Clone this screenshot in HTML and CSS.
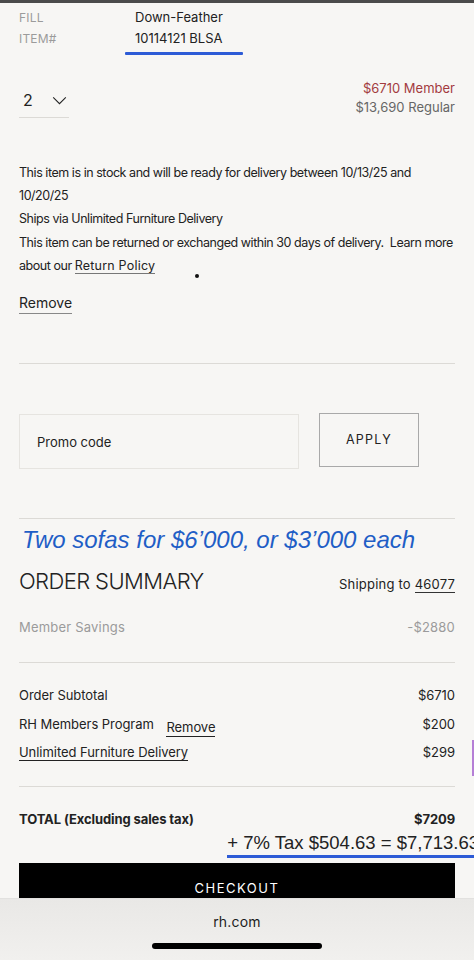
FILE: index.html
```html
<!DOCTYPE html>
<html lang="en">
<head>
    <meta charset="UTF-8">
    <meta name="viewport" content="width=device-width, initial-scale=1.0">
    <title>Cart - RH</title>
    <link rel="stylesheet" href="styles.css">
</head>
<body>
    <div class="top-edge"></div>

    <main class="cart">
        <!-- Item specs -->
        <div class="specs">
            <span class="spec-label">FILL</span>
            <span class="spec-value">Down-Feather</span>
            <span class="spec-label">ITEM#</span>
            <span class="spec-value">
                10114121 BLSA
                <span class="mark-line mark-item"></span>
            </span>
        </div>

        <div class="qty-row">
            <div class="qty">
                <span>2</span>
                <svg class="chevron" viewBox="0 0 16 10" fill="none" stroke="#222" stroke-width="1.2">
                    <path d="M1 1.5l7 7 7-7"/>
                </svg>
            </div>
            <div class="prices">
                <div class="price-member">$6710 Member</div>
                <div class="price-regular">$13,690 Regular</div>
            </div>
        </div>

        <div class="delivery">
            <p>This item is in stock and will be ready for delivery between 10/13/25 and 10/20/25</p>
            <p>Ships via Unlimited Furniture Delivery</p>
            <p>This item can be returned or exchanged within 30 days of delivery.&nbsp; Learn more about our <a href="#">Return Policy</a></p>
            <span class="stray-dot"></span>
        </div>

        <a href="#" class="remove-link">Remove</a>

        <hr class="divider divider-item">

        <!-- Promo -->
        <form class="promo">
            <input type="text" placeholder="Promo code">
            <button type="button">APPLY</button>
        </form>

        <hr class="divider divider-promo">

        <div class="deal-note">Two sofas for $6’000, or $3’000 each</div>

        <!-- Summary -->
        <div class="summary-head">
            <h2>ORDER SUMMARY</h2>
            <span class="ship-to">Shipping to <a href="#">46077</a></span>
        </div>

        <div class="line line-muted">
            <span>Member Savings</span>
            <span>-$2880</span>
        </div>

        <hr class="divider divider-savings">

        <div class="lines">
            <div class="line">
                <span>Order Subtotal</span>
                <span>$6710</span>
            </div>
            <div class="line">
                <span>RH Members Program <a href="#" class="small-remove">Remove</a></span>
                <span>$200</span>
            </div>
            <div class="line">
                <a href="#">Unlimited Furniture Delivery</a>
                <span>$299</span>
            </div>
        </div>

        <hr class="divider divider-total">

        <div class="line line-total">
            <span>TOTAL (Excluding sales tax)</span>
            <span>$7209</span>
        </div>

        <div class="tax-note">
            <span>+ 7% Tax $504.63 = $7,713.63</span>
        </div>

        <button class="checkout" type="button">CHECKOUT</button>
    </main>

    <div class="edge-tab"></div>

    <!-- Safari bottom bar -->
    <div class="browser-bar">
        <div class="url">rh.com</div>
        <div class="home-indicator"></div>
    </div>
</body>
</html>
```

FILE: styles.css
```css
/* Base */
* {
    box-sizing: border-box;
}
body {
    margin: 0;
    background-color: #f7f6f4;
    color: #222;
    font-family: Inter, "Liberation Sans", sans-serif;
    font-size: 12.5px;
    overflow: hidden;
    height: 960px;
}
a {
    color: inherit;
    text-decoration: none;
    border-bottom: 1px solid #555;
}

.top-edge {
    height: 3px;
    background-color: #4b4b4b;
}

.cart {
    padding: 0 19px;
}

/* Specs */
.specs {
    display: grid;
    grid-template-columns: 116px auto;
    line-height: 21px;
    padding-top: 4px;
}
.spec-label {
    color: #9b9b9b;
    font-size: 12px;
    letter-spacing: 0.2px;
}
.spec-value {
    font-size: 13px;
}
.mark-line {
    display: block;
    height: 3px;
    background-color: #2d5bd6;
    border-radius: 1px;
}
.mark-item {
    width: 118px;
    margin: 3px 0 0 -10px;
}

/* Quantity and prices */
.qty-row {
    display: flex;
    justify-content: space-between;
    margin-top: 24px;
}
.qty {
    display: flex;
    align-items: center;
    gap: 19px;
    width: 50px;
    margin-top: 11px;
    padding: 0 0 7px 4px;
    height: 28px;
    font-size: 16px;
    line-height: 20px;
    border-bottom: 1px solid #dcdad6;
}
.chevron {
    width: 15px;
    height: 9px;
}
.prices {
    text-align: right;
    font-size: 13px;
    line-height: 19px;
}
.price-member {
    color: #a33b3f;
}
.price-regular {
    color: #666;
}

/* Delivery info */
.delivery {
    position: relative;
    margin-top: 43px;
    line-height: 23.2px;
    letter-spacing: -0.45px;
}
.delivery p {
    margin: 0;
}
.delivery a {
    border-bottom-color: #777;
    letter-spacing: 0.2px;
}
.stray-dot {
    position: absolute;
    left: 176px;
    top: 113px;
    width: 4px;
    height: 4px;
    border-radius: 50%;
    background-color: #111;
}

.remove-link {
    display: inline-block;
    margin-top: 17px;
    font-size: 14px;
    line-height: 18px;
    padding-bottom: 1px;
    border-bottom-color: #888;
}

.divider {
    border: none;
    height: 1px;
    background-color: #dcdad6;
    margin: 0;
}
.divider-item {
    margin-top: 49px;
}

/* Promo */
.promo {
    display: flex;
    gap: 20px;
    margin-top: 50px;
}
.promo input {
    width: 280px;
    height: 55px;
    padding: 0 17px;
    background: transparent;
    border: 1px solid #e6e4e0;
    font-family: inherit;
    font-size: 13px;
    outline: none;
}
.promo input::placeholder {
    color: #222;
}
.promo button {
    width: 100px;
    height: 54px;
    margin-top: -1px;
    background: transparent;
    border: 1px solid #a9a9a9;
    font-family: inherit;
    font-size: 12.5px;
    letter-spacing: 1.3px;
    color: #222;
    padding-bottom: 2px;
}
.divider-promo {
    margin-top: 49px;
}

.deal-note {
    margin-top: 7px;
    font-family: "Liberation Sans", Arial, sans-serif;
    font-style: italic;
    font-size: 24px;
    line-height: 28px;
    color: #1f5ec6;
    padding-left: 3px;
}

/* Order summary */
.summary-head {
    display: flex;
    justify-content: space-between;
    align-items: baseline;
    margin-top: 14px;
}
.summary-head h2 {
    margin: 0;
    font-size: 22px;
    font-weight: 300;
    letter-spacing: -0.6px;
    line-height: 26px;
}
.ship-to {
    font-size: 13px;
    letter-spacing: 0.2px;
}
.ship-to a {
    border-bottom-color: #333;
}

.line {
    display: flex;
    justify-content: space-between;
    align-items: center;
    font-size: 13px;
    line-height: 20px;
    letter-spacing: -0.05px;
}
.line-muted {
    color: #9b9b9b;
    margin-top: 23px;
    letter-spacing: 0.2px;
}
.divider-savings {
    margin-top: 25px;
}
.lines {
    display: flex;
    flex-direction: column;
    gap: 8.5px;
    margin-top: 22px;
}
.lines a {
    border-bottom-color: #222;
    line-height: 16px;
}
.small-remove {
    display: inline-block;
    margin-left: 9px;
    position: relative;
    top: 3px;
    line-height: 16px;
    padding-bottom: 1px;
    border-bottom-color: #888;
}
.divider-total {
    margin-top: 24px;
}

.line-total {
    margin-top: 22px;
    font-weight: 700;
    letter-spacing: -0.1px;
}

.tax-note {
    display: flex;
    justify-content: flex-end;
    margin-top: 3px;
    margin-right: -24px;
}
.tax-note span {
    font-family: "Liberation Sans", Arial, sans-serif;
    font-size: 18.5px;
    line-height: 22px;
    white-space: nowrap;
    padding-bottom: 1px;
    border-bottom: 3px solid #2d5bd6;
}

.checkout {
    display: block;
    width: 100%;
    height: 50px;
    margin-top: 5px;
    background-color: #000;
    color: #fff;
    border: none;
    font-family: inherit;
    font-size: 13px;
    letter-spacing: 1.5px;
}

.edge-tab {
    position: fixed;
    right: 0;
    top: 740px;
    width: 2px;
    height: 36px;
    background-color: #b57fd6;
}

/* Browser chrome */
.browser-bar {
    position: fixed;
    left: 0;
    right: 0;
    bottom: 0;
    height: 62px;
    background: linear-gradient(#e9e8e6, #f1f0ee);
    border-top: 1px solid #e2e1df;
    text-align: center;
}
.url {
    margin-top: 14px;
    font-size: 14px;
    color: #1c1c1c;
    letter-spacing: 0.2px;
}
.home-indicator {
    width: 170px;
    height: 6px;
    margin: 13px auto 0;
    border-radius: 3px;
    background-color: #000;
}
```
